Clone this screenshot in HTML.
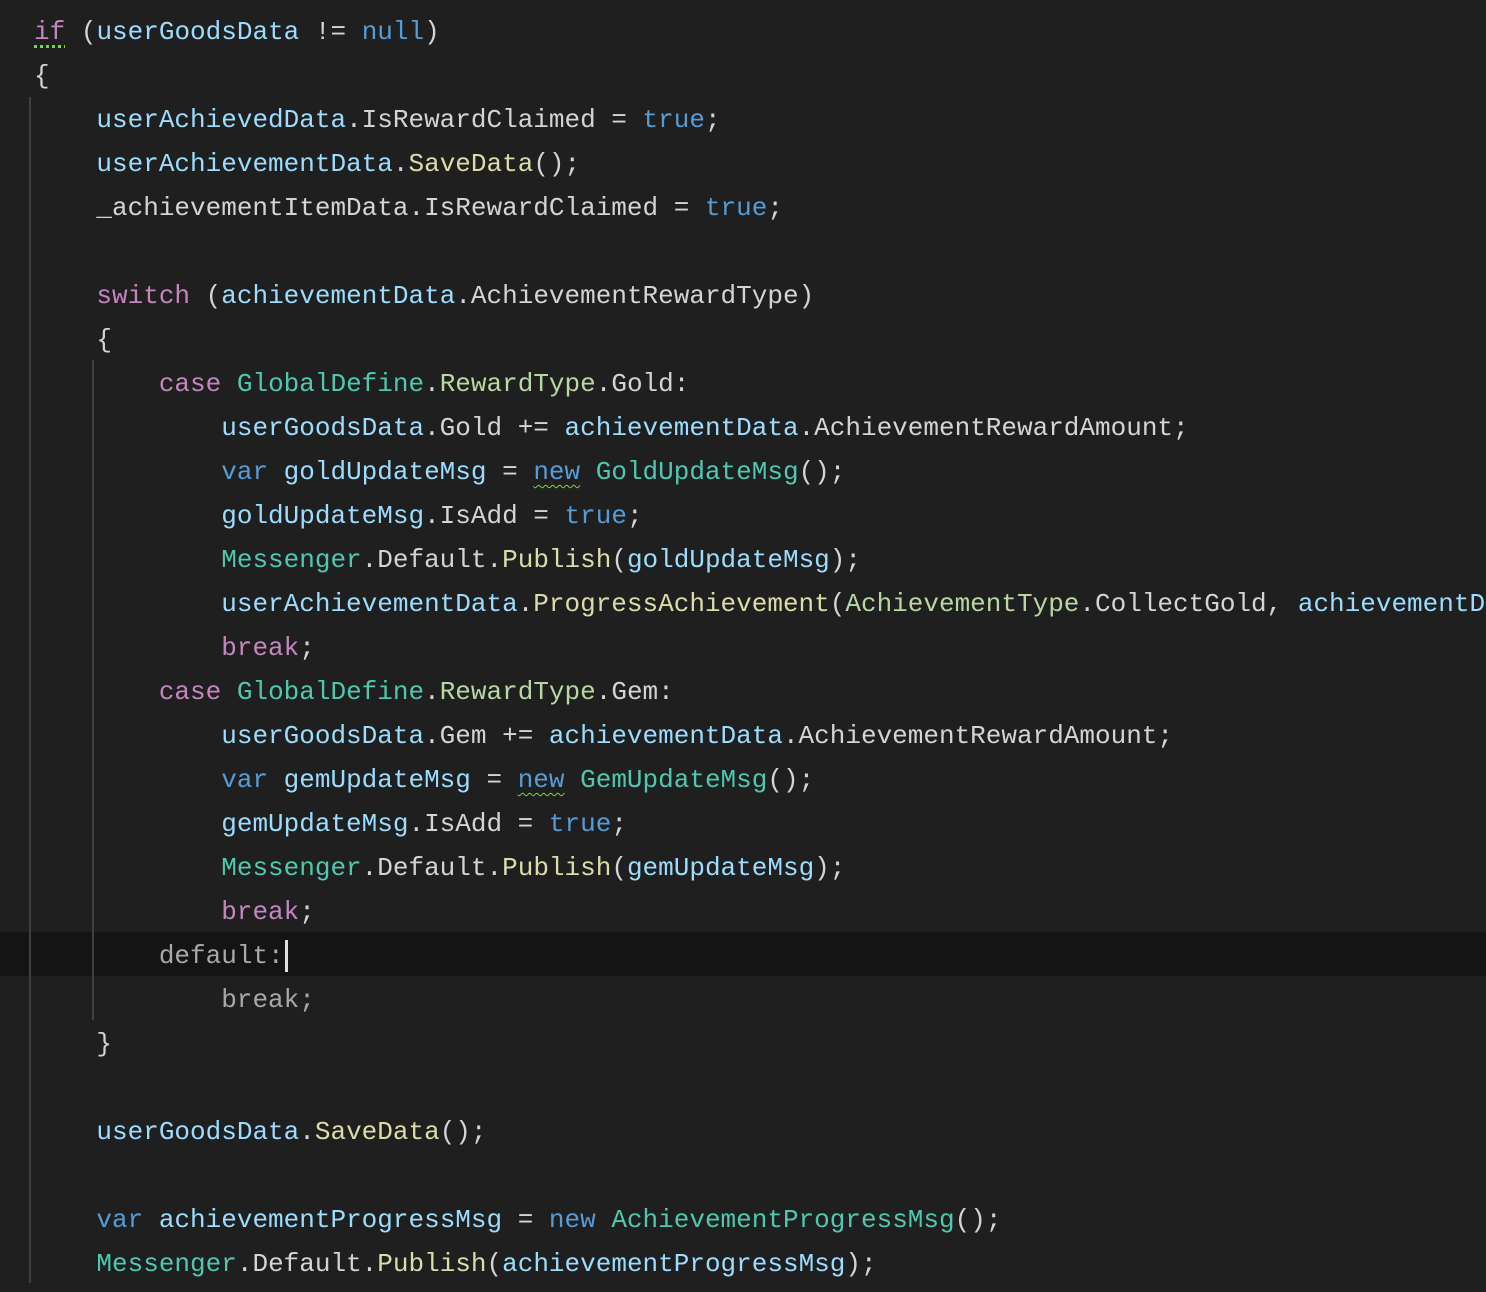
<!DOCTYPE html>
<html><head><meta charset="utf-8"><style>
html,body{margin:0;padding:0;background:#1f1f1f;width:1486px;height:1292px;overflow:hidden}
.c{position:absolute;left:34px;top:10px;font-family:"Liberation Mono",monospace;font-size:26px;line-height:44px;color:#d4d4d4;white-space:pre}
.l{height:44px}
.v{color:#9cdcfe}.k{color:#569cd6}.p{color:#c586c0}.t{color:#4ec9b0}.m{color:#dcdcaa}.e{color:#b8d7a3}.g{color:#a8a8a8}
.hl{position:absolute;left:0;top:932px;width:1486px;height:44px;background:#141414}
.guide{position:absolute;width:2px;background:#404040}
.sq{text-decoration:underline wavy #6fdc3c;text-decoration-thickness:1px;text-underline-offset:5px}
.dt{text-decoration:underline dotted #6fdc3c;text-decoration-thickness:3px;text-underline-offset:6px}
.cur{display:inline-block;width:3px;height:32px;background:#e0e0e0;vertical-align:middle;margin-left:1px}
</style></head><body>
<div class="hl"></div>
<div class="guide" style="left:29px;top:97px;height:1186px"></div>
<div class="guide" style="left:92px;top:360px;height:660px"></div>
<div class="c"><div class="l"><span class="p dt">if</span> (<span class="v">userGoodsData</span> != <span class="k">null</span>)</div><div class="l">{</div><div class="l">    <span class="v">userAchievedData</span>.IsRewardClaimed = <span class="k">true</span>;</div><div class="l">    <span class="v">userAchievementData</span>.<span class="m">SaveData</span>();</div><div class="l">    _achievementItemData.IsRewardClaimed = <span class="k">true</span>;</div><div class="l"> </div><div class="l">    <span class="p">switch</span> (<span class="v">achievementData</span>.AchievementRewardType)</div><div class="l">    {</div><div class="l">        <span class="p">case</span> <span class="t">GlobalDefine</span>.<span class="e">RewardType</span>.Gold:</div><div class="l">            <span class="v">userGoodsData</span>.Gold += <span class="v">achievementData</span>.AchievementRewardAmount;</div><div class="l">            <span class="k">var</span> <span class="v">goldUpdateMsg</span> = <span class="k sq">new</span> <span class="t">GoldUpdateMsg</span>();</div><div class="l">            <span class="v">goldUpdateMsg</span>.IsAdd = <span class="k">true</span>;</div><div class="l">            <span class="t">Messenger</span>.Default.<span class="m">Publish</span>(<span class="v">goldUpdateMsg</span>);</div><div class="l">            <span class="v">userAchievementData</span>.<span class="m">ProgressAchievement</span>(<span class="e">AchievementType</span>.CollectGold, <span class="v">achievementData</span></div><div class="l">            <span class="p">break</span>;</div><div class="l">        <span class="p">case</span> <span class="t">GlobalDefine</span>.<span class="e">RewardType</span>.Gem:</div><div class="l">            <span class="v">userGoodsData</span>.Gem += <span class="v">achievementData</span>.AchievementRewardAmount;</div><div class="l">            <span class="k">var</span> <span class="v">gemUpdateMsg</span> = <span class="k sq">new</span> <span class="t">GemUpdateMsg</span>();</div><div class="l">            <span class="v">gemUpdateMsg</span>.IsAdd = <span class="k">true</span>;</div><div class="l">            <span class="t">Messenger</span>.Default.<span class="m">Publish</span>(<span class="v">gemUpdateMsg</span>);</div><div class="l">            <span class="p">break</span>;</div><div class="l">        <span class="g">default:</span><span class="cur"></span></div><div class="l">            <span class="g">break;</span></div><div class="l">    }</div><div class="l"> </div><div class="l">    <span class="v">userGoodsData</span>.<span class="m">SaveData</span>();</div><div class="l"> </div><div class="l">    <span class="k">var</span> <span class="v">achievementProgressMsg</span> = <span class="k">new</span> <span class="t">AchievementProgressMsg</span>();</div><div class="l">    <span class="t">Messenger</span>.Default.<span class="m">Publish</span>(<span class="v">achievementProgressMsg</span>);</div></div>
</body></html>
